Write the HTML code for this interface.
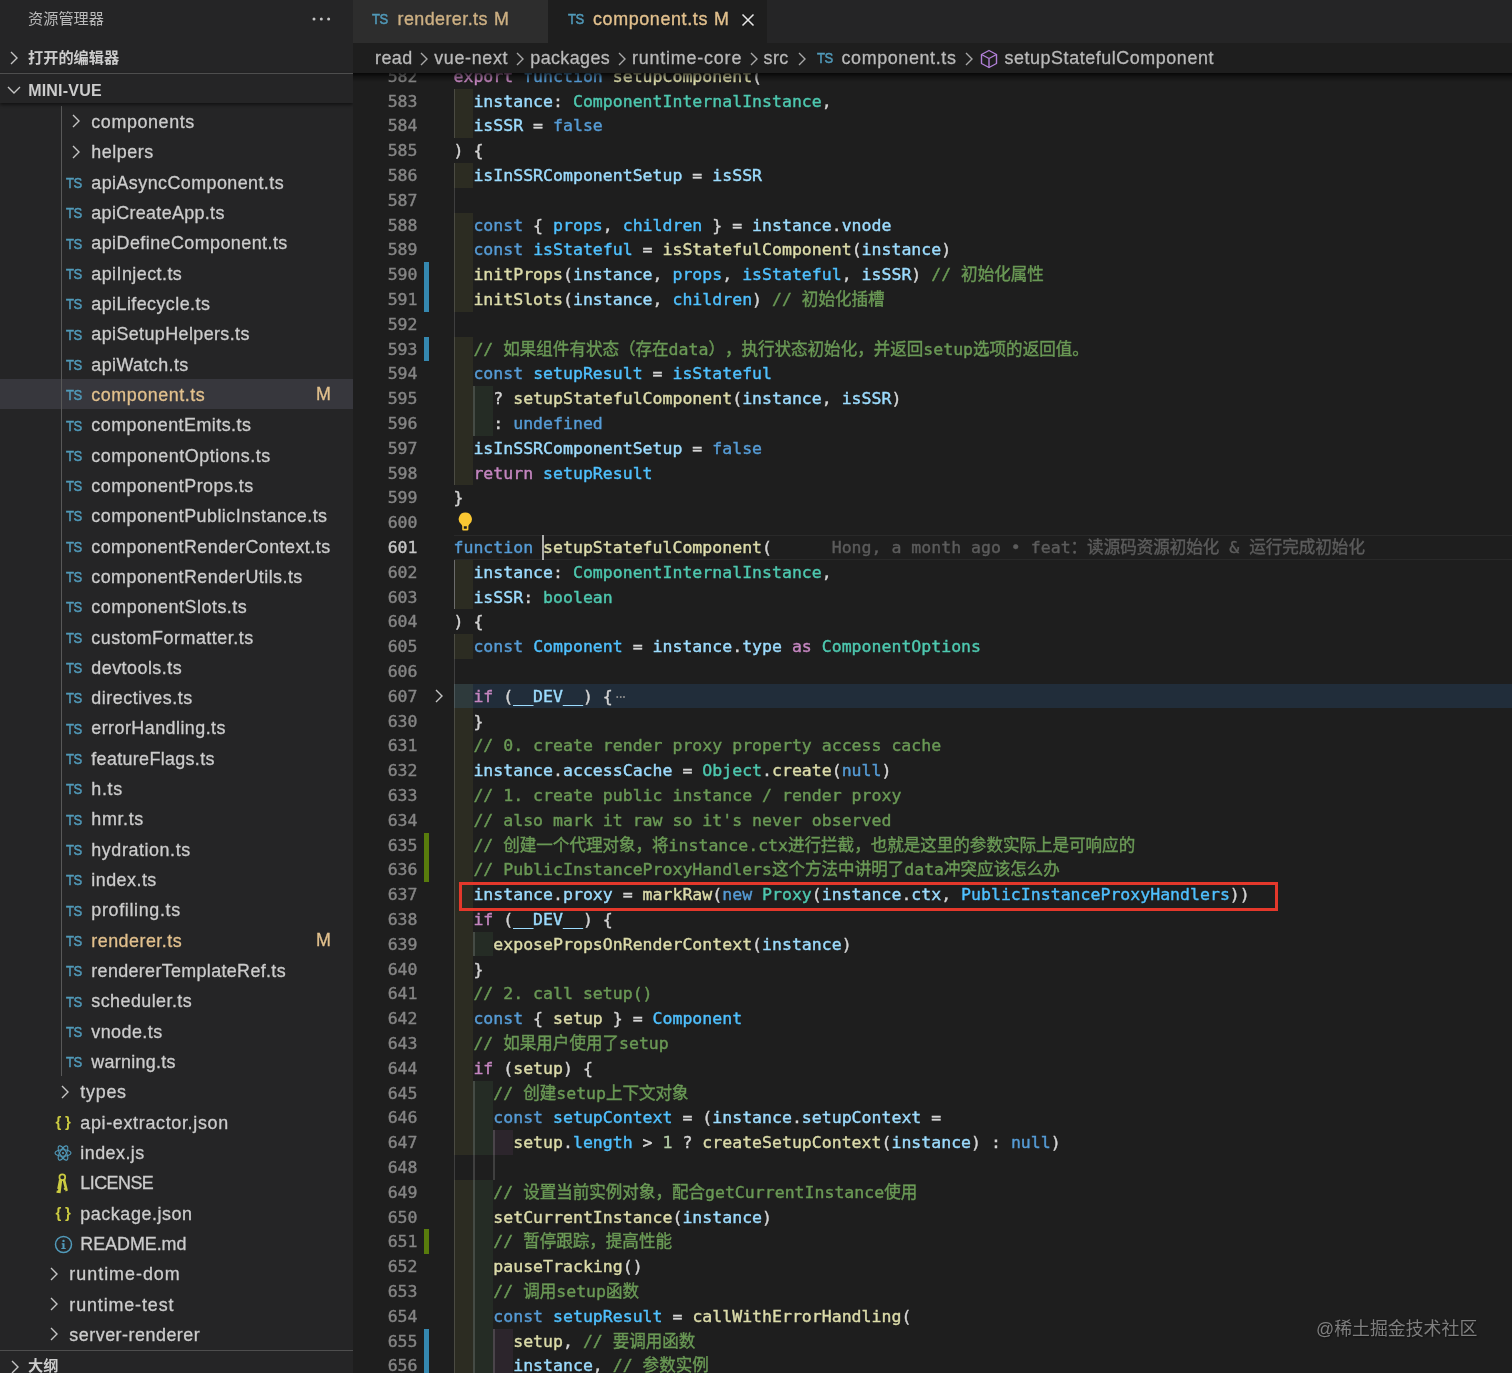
<!DOCTYPE html>
<html lang="zh-CN"><head><meta charset="utf-8"><title>component.ts — mini-vue</title>
<style>
*{box-sizing:border-box;margin:0;padding:0}
html,body{width:1512px;height:1373px;overflow:hidden;background:#1e1e1e}
body{position:relative;text-spacing-trim:space-all;font-family:'Liberation Sans','Noto Sans CJK SC',sans-serif;color:#ccc;-webkit-font-smoothing:antialiased}
.a{position:absolute;white-space:pre}
#sidebg{position:absolute;left:0;top:0;width:353px;height:1373px;background:#252526}
#side{position:absolute;left:0;top:0;width:353px;height:1373px;overflow:hidden;will-change:transform}
.row{position:absolute;left:0;width:353px;height:30.32px;line-height:30.32px;font-size:17.9px;color:#ccc;white-space:pre}
.row span.t{position:absolute;top:.8px;letter-spacing:.46px;-webkit-text-stroke:.3px}
.ts{position:absolute;top:1px;font-size:14.8px;color:#519aba;letter-spacing:-.4px;-webkit-text-stroke:.5px;transform:scaleX(.88);transform-origin:0 50%}
.hd{position:absolute;left:0;width:353px;height:30.32px;line-height:30.32px;font-size:15.2px;font-weight:bold;color:#ccc;white-space:pre}
#ed{position:absolute;left:353px;top:0;width:1159px;height:1373px;overflow:hidden;will-change:transform}
.ln{position:absolute;left:0;width:64.5px;text-align:right;color:#858585;font-family:'DejaVu Sans Mono','Liberation Mono','Noto Sans CJK SC',monospace;font-size:16.54px;height:24.8px;line-height:24.8px;padding-top:1px;-webkit-text-stroke:.4px}
.cl{position:absolute;left:100.5px;white-space:pre;font-family:'DejaVu Sans Mono','Liberation Mono','Noto Sans CJK SC',monospace;font-size:16.54px;height:24.8px;line-height:24.8px;padding-top:1px;color:#d4d4d4;-webkit-text-stroke:.4px}
.k{color:#c586c0}.s{color:#569cd6}.f{color:#dcdcaa}.v{color:#9cdcfe}.t{color:#4ec9b0}.c{color:#4fc1ff}.m{color:#6a9955}.n{color:#b5cea8}
.ir{position:absolute;height:24.8px}
.gb{position:absolute;left:71.2px;width:4.6px}
</style></head><body>

<div id="sidebg"></div><div id="side">
<span class="a" style="left:28px;top:8px;height:22px;line-height:22px;font-size:15.2px;color:#bbb">资源管理器</span>
<svg class="a" style="left:311px;top:16px" width="22" height="6" viewBox="0 0 22 6"><circle cx="3" cy="3" r="1.5" fill="#c5c5c5"/><circle cx="10.3" cy="3" r="1.5" fill="#c5c5c5"/><circle cx="17.6" cy="3" r="1.5" fill="#c5c5c5"/></svg>
<div class="hd" style="top:43px"><svg class="a" style="left:9.5px;top:8.2px" width="8.0" height="14.0" viewBox="0 0 8.00 14.00"><polyline points="1,1 7.00,7.00 1,13.00" fill="none" stroke="#c5c5c5" stroke-width="1.40" stroke-linejoin="miter"/></svg><span class="a" style="left:28px;top:0">打开的编辑器</span></div>
<div class="hd" style="top:73.3px;height:29.4px;border-top:1.5px solid #4e4e4e;box-shadow:0 2px 3px rgba(0,0,0,.5);z-index:3;background:#252526"><svg class="a" style="left:7.0px;top:12.2px" width="14.0" height="8.0" viewBox="0 0 14.00 8.00"><polyline points="1,1 7.00,7.00 13.00,1" fill="none" stroke="#c5c5c5" stroke-width="1.40" stroke-linejoin="miter"/></svg><span class="a" style="left:28.2px;top:1.9px;font-size:16px;letter-spacing:.2px">MINI-VUE</span></div>
<div class="a" style="left:0;top:379.18px;width:353px;height:30.32px;background:#37373d"></div>
<div class="a" style="left:61.3px;top:106.3px;width:1.2px;height:970.2px;background:#585858"></div>
<div class="row" style="top:106.30px"><svg class="a" style="left:71.8px;top:8.2px" width="8.0" height="14.0" viewBox="0 0 8.00 14.00"><polyline points="1,1 7.00,7.00 1,13.00" fill="none" stroke="#c5c5c5" stroke-width="1.40" stroke-linejoin="miter"/></svg><span class="t" style="left:91.3px;color:#ccc;letter-spacing:0.61px">components</span></div>
<div class="row" style="top:136.62px"><svg class="a" style="left:71.8px;top:8.2px" width="8.0" height="14.0" viewBox="0 0 8.00 14.00"><polyline points="1,1 7.00,7.00 1,13.00" fill="none" stroke="#c5c5c5" stroke-width="1.40" stroke-linejoin="miter"/></svg><span class="t" style="left:91.3px;color:#ccc;letter-spacing:0.53px">helpers</span></div>
<div class="row" style="top:166.94px"><span class="ts" style="left:66.0px">TS</span><span class="t" style="left:91.3px;color:#ccc;letter-spacing:0.44px">apiAsyncComponent.ts</span></div>
<div class="row" style="top:197.26px"><span class="ts" style="left:66.0px">TS</span><span class="t" style="left:91.3px;color:#ccc;letter-spacing:0.34px">apiCreateApp.ts</span></div>
<div class="row" style="top:227.58px"><span class="ts" style="left:66.0px">TS</span><span class="t" style="left:91.3px;color:#ccc;letter-spacing:0.45px">apiDefineComponent.ts</span></div>
<div class="row" style="top:257.90px"><span class="ts" style="left:66.0px">TS</span><span class="t" style="left:91.3px;color:#ccc;letter-spacing:0.45px">apiInject.ts</span></div>
<div class="row" style="top:288.22px"><span class="ts" style="left:66.0px">TS</span><span class="t" style="left:91.3px;color:#ccc;letter-spacing:0.44px">apiLifecycle.ts</span></div>
<div class="row" style="top:318.54px"><span class="ts" style="left:66.0px">TS</span><span class="t" style="left:91.3px;color:#ccc;letter-spacing:0.41px">apiSetupHelpers.ts</span></div>
<div class="row" style="top:348.86px"><span class="ts" style="left:66.0px">TS</span><span class="t" style="left:91.3px;color:#ccc;letter-spacing:0.42px">apiWatch.ts</span></div>
<div class="row" style="top:379.18px"><span class="ts" style="left:66.0px">TS</span><span class="t" style="left:91.3px;color:#e2c08d;letter-spacing:0.55px">component.ts</span><span class="a" style="left:316px;top:0;color:#e2c08d;font-size:17.9px;-webkit-text-stroke:.3px">M</span></div>
<div class="row" style="top:409.50px"><span class="ts" style="left:66.0px">TS</span><span class="t" style="left:91.3px;color:#ccc;letter-spacing:0.47px">componentEmits.ts</span></div>
<div class="row" style="top:439.82px"><span class="ts" style="left:66.0px">TS</span><span class="t" style="left:91.3px;color:#ccc;letter-spacing:0.55px">componentOptions.ts</span></div>
<div class="row" style="top:470.14px"><span class="ts" style="left:66.0px">TS</span><span class="t" style="left:91.3px;color:#ccc;letter-spacing:0.49px">componentProps.ts</span></div>
<div class="row" style="top:500.46px"><span class="ts" style="left:66.0px">TS</span><span class="t" style="left:91.3px;color:#ccc;letter-spacing:0.48px">componentPublicInstance.ts</span></div>
<div class="row" style="top:530.78px"><span class="ts" style="left:66.0px">TS</span><span class="t" style="left:91.3px;color:#ccc;letter-spacing:0.46px">componentRenderContext.ts</span></div>
<div class="row" style="top:561.10px"><span class="ts" style="left:66.0px">TS</span><span class="t" style="left:91.3px;color:#ccc;letter-spacing:0.46px">componentRenderUtils.ts</span></div>
<div class="row" style="top:591.42px"><span class="ts" style="left:66.0px">TS</span><span class="t" style="left:91.3px;color:#ccc;letter-spacing:0.52px">componentSlots.ts</span></div>
<div class="row" style="top:621.74px"><span class="ts" style="left:66.0px">TS</span><span class="t" style="left:91.3px;color:#ccc;letter-spacing:0.52px">customFormatter.ts</span></div>
<div class="row" style="top:652.06px"><span class="ts" style="left:66.0px">TS</span><span class="t" style="left:91.3px;color:#ccc;letter-spacing:0.48px">devtools.ts</span></div>
<div class="row" style="top:682.38px"><span class="ts" style="left:66.0px">TS</span><span class="t" style="left:91.3px;color:#ccc;letter-spacing:0.53px">directives.ts</span></div>
<div class="row" style="top:712.70px"><span class="ts" style="left:66.0px">TS</span><span class="t" style="left:91.3px;color:#ccc;letter-spacing:0.46px">errorHandling.ts</span></div>
<div class="row" style="top:743.02px"><span class="ts" style="left:66.0px">TS</span><span class="t" style="left:91.3px;color:#ccc;letter-spacing:0.34px">featureFlags.ts</span></div>
<div class="row" style="top:773.34px"><span class="ts" style="left:66.0px">TS</span><span class="t" style="left:91.3px;color:#ccc;letter-spacing:0.70px">h.ts</span></div>
<div class="row" style="top:803.66px"><span class="ts" style="left:66.0px">TS</span><span class="t" style="left:91.3px;color:#ccc;letter-spacing:0.65px">hmr.ts</span></div>
<div class="row" style="top:833.98px"><span class="ts" style="left:66.0px">TS</span><span class="t" style="left:91.3px;color:#ccc;letter-spacing:0.58px">hydration.ts</span></div>
<div class="row" style="top:864.30px"><span class="ts" style="left:66.0px">TS</span><span class="t" style="left:91.3px;color:#ccc;letter-spacing:0.48px">index.ts</span></div>
<div class="row" style="top:894.62px"><span class="ts" style="left:66.0px">TS</span><span class="t" style="left:91.3px;color:#ccc;letter-spacing:0.67px">profiling.ts</span></div>
<div class="row" style="top:924.94px"><span class="ts" style="left:66.0px">TS</span><span class="t" style="left:91.3px;color:#e2c08d;letter-spacing:0.48px">renderer.ts</span><span class="a" style="left:316px;top:0;color:#e2c08d;font-size:17.9px;-webkit-text-stroke:.3px">M</span></div>
<div class="row" style="top:955.26px"><span class="ts" style="left:66.0px">TS</span><span class="t" style="left:91.3px;color:#ccc;letter-spacing:0.35px">rendererTemplateRef.ts</span></div>
<div class="row" style="top:985.58px"><span class="ts" style="left:66.0px">TS</span><span class="t" style="left:91.3px;color:#ccc;letter-spacing:0.45px">scheduler.ts</span></div>
<div class="row" style="top:1015.90px"><span class="ts" style="left:66.0px">TS</span><span class="t" style="left:91.3px;color:#ccc;letter-spacing:0.45px">vnode.ts</span></div>
<div class="row" style="top:1046.22px"><span class="ts" style="left:66.0px">TS</span><span class="t" style="left:91.3px;color:#ccc;letter-spacing:0.30px">warning.ts</span></div>
<div class="row" style="top:1076.54px"><svg class="a" style="left:60.8px;top:8.2px" width="8.0" height="14.0" viewBox="0 0 8.00 14.00"><polyline points="1,1 7.00,7.00 1,13.00" fill="none" stroke="#c5c5c5" stroke-width="1.40" stroke-linejoin="miter"/></svg><span class="t" style="left:80.3px;color:#ccc;letter-spacing:0.75px">types</span></div>
<div class="row" style="top:1106.86px"><span class="a" style="left:55.6px;top:4.9px;height:20px;line-height:20px;font-size:15px;font-weight:bold;color:#cbcb41;letter-spacing:3.6px">{}</span><span class="t" style="left:80.3px;color:#ccc;letter-spacing:0.68px">api-extractor.json</span></div>
<div class="row" style="top:1137.18px"><svg class="a" style="left:54.3px;top:7.2px" width="18" height="18" viewBox="-9 -9 18 18" fill="none" stroke="#519aba" stroke-width="1.1"><ellipse rx="8" ry="3.2"/><ellipse rx="8" ry="3.2" transform="rotate(60)"/><ellipse rx="8" ry="3.2" transform="rotate(120)"/><circle r="1.1" fill="#519aba" stroke="none"/></svg><span class="t" style="left:80.3px;color:#ccc;letter-spacing:0.47px">index.js</span></div>
<div class="row" style="top:1167.50px"><svg class="a" style="left:54.8px;top:5.0px" width="14" height="21" viewBox="0 0 14 21"><circle cx="7.3" cy="4.2" r="2.9" fill="none" stroke="#cbcb41" stroke-width="1.7"/><path d="M4.0 6.4 L7.2 7.4 L5.6 20.2 L1.4 19.8 L1.8 17.4 L3.0 17.5 L3.2 15.9 L2.2 15.7Z" fill="#cbcb41"/><path d="M7.6 7.2 L10.2 6.2 L12.9 17.4 L10.6 18.4 L10.1 16.6 L9.1 16.9 L8.7 15.3 L9.6 15.0Z" fill="#cbcb41"/></svg><span class="t" style="left:80.3px;color:#ccc;letter-spacing:-0.52px">LICENSE</span></div>
<div class="row" style="top:1197.82px"><span class="a" style="left:55.6px;top:4.9px;height:20px;line-height:20px;font-size:15px;font-weight:bold;color:#cbcb41;letter-spacing:3.6px">{}</span><span class="t" style="left:80.3px;color:#ccc;letter-spacing:0.57px">package.json</span></div>
<div class="row" style="top:1228.14px"><svg class="a" style="left:53.5px;top:6.6px" width="19" height="19" viewBox="-9.5 -9.5 19 19"><circle r="8" fill="none" stroke="#519aba" stroke-width="1.5"/><circle cx="0" cy="-3.6" r="1.2" fill="#519aba"/><path d="M-1.8 -1.2H1V3.4H2.2V4.6H-2.2V3.4H-1V0H-1.8Z" fill="#519aba"/></svg><span class="t" style="left:80.3px;color:#ccc;letter-spacing:-0.03px">README.md</span></div>
<div class="row" style="top:1258.46px"><svg class="a" style="left:49.8px;top:8.2px" width="8.0" height="14.0" viewBox="0 0 8.00 14.00"><polyline points="1,1 7.00,7.00 1,13.00" fill="none" stroke="#c5c5c5" stroke-width="1.40" stroke-linejoin="miter"/></svg><span class="t" style="left:69.3px;color:#ccc;letter-spacing:1.00px">runtime-dom</span></div>
<div class="row" style="top:1288.78px"><svg class="a" style="left:49.8px;top:8.2px" width="8.0" height="14.0" viewBox="0 0 8.00 14.00"><polyline points="1,1 7.00,7.00 1,13.00" fill="none" stroke="#c5c5c5" stroke-width="1.40" stroke-linejoin="miter"/></svg><span class="t" style="left:69.3px;color:#ccc;letter-spacing:0.88px">runtime-test</span></div>
<div class="row" style="top:1319.10px"><svg class="a" style="left:49.8px;top:8.2px" width="8.0" height="14.0" viewBox="0 0 8.00 14.00"><polyline points="1,1 7.00,7.00 1,13.00" fill="none" stroke="#c5c5c5" stroke-width="1.40" stroke-linejoin="miter"/></svg><span class="t" style="left:69.3px;color:#ccc;letter-spacing:0.51px">server-renderer</span></div>
<div class="hd" style="top:1350.4px;border-top:1.5px solid #4e4e4e;background:#252526"><svg class="a" style="left:10.5px;top:8.2px" width="8.0" height="14.0" viewBox="0 0 8.00 14.00"><polyline points="1,1 7.00,7.00 1,13.00" fill="none" stroke="#c5c5c5" stroke-width="1.40" stroke-linejoin="miter"/></svg><span class="a" style="left:28px;top:0">大纲</span></div>
</div>
<div id="ed">
<div class="a" style="left:100.5px;top:683.70px;width:1060px;height:24.80px;background:#212d3a"></div>
<div class="a" style="left:100.5px;top:534.90px;width:1060px;height:24.80px;border-top:1.4px solid #292929;border-bottom:1.4px solid #292929"></div>
<div class="a" style="left:100.50px;top:88.50px;width:19.92px;height:49.60px;background:rgba(255,255,90,.062)"></div>
<div class="a" style="left:100.50px;top:162.90px;width:19.92px;height:24.80px;background:rgba(255,255,90,.062)"></div>
<div class="a" style="left:100.50px;top:212.50px;width:19.92px;height:99.20px;background:rgba(255,255,90,.062)"></div>
<div class="a" style="left:100.50px;top:336.50px;width:19.92px;height:148.80px;background:rgba(255,255,90,.062)"></div>
<div class="a" style="left:100.50px;top:559.70px;width:19.92px;height:49.60px;background:rgba(255,255,90,.062)"></div>
<div class="a" style="left:100.50px;top:634.10px;width:19.92px;height:24.80px;background:rgba(255,255,90,.062)"></div>
<div class="a" style="left:100.50px;top:683.70px;width:19.92px;height:471.20px;background:rgba(255,255,90,.062)"></div>
<div class="a" style="left:100.50px;top:1179.70px;width:19.92px;height:198.40px;background:rgba(255,255,90,.062)"></div>
<div class="a" style="left:120.42px;top:386.10px;width:19.92px;height:49.60px;background:rgba(140,255,140,.062)"></div>
<div class="a" style="left:120.42px;top:931.70px;width:19.92px;height:24.80px;background:rgba(140,255,140,.062)"></div>
<div class="a" style="left:120.42px;top:1080.50px;width:19.92px;height:74.40px;background:rgba(140,255,140,.062)"></div>
<div class="a" style="left:120.42px;top:1179.70px;width:19.92px;height:198.40px;background:rgba(140,255,140,.062)"></div>
<div class="a" style="left:140.34px;top:1130.10px;width:19.92px;height:24.80px;background:rgba(255,140,255,.062)"></div>
<div class="a" style="left:140.34px;top:1328.50px;width:19.92px;height:49.60px;background:rgba(255,140,255,.062)"></div>
<div class="a" style="left:100.50px;top:88.50px;width:1.4px;height:49.60px;background:rgba(255,255,255,.15)"></div>
<div class="a" style="left:100.50px;top:162.90px;width:1.4px;height:322.40px;background:rgba(255,255,255,.15)"></div>
<div class="a" style="left:100.50px;top:559.70px;width:1.4px;height:49.60px;background:rgba(255,255,255,.15)"></div>
<div class="a" style="left:100.50px;top:634.10px;width:1.4px;height:744.00px;background:rgba(255,255,255,.15)"></div>
<div class="a" style="left:120.42px;top:386.10px;width:1.4px;height:49.60px;background:rgba(255,255,255,.15)"></div>
<div class="a" style="left:120.42px;top:931.70px;width:1.4px;height:24.80px;background:rgba(255,255,255,.15)"></div>
<div class="a" style="left:120.42px;top:1080.50px;width:1.4px;height:297.60px;background:rgba(255,255,255,.15)"></div>
<div class="a" style="left:140.34px;top:1130.10px;width:1.4px;height:49.60px;background:rgba(255,255,255,.15)"></div>
<div class="a" style="left:140.34px;top:1328.50px;width:1.4px;height:49.60px;background:rgba(255,255,255,.15)"></div>
<div class="a" style="left:100.50px;top:559.70px;width:1.4px;height:49.60px;background:#6c6c6c"></div>
<div class="gb" style="top:262.10px;height:49.60px;background:#3588b0"></div>
<div class="gb" style="top:336.50px;height:24.80px;background:#3588b0"></div>
<div class="gb" style="top:1328.50px;height:49.60px;background:#3588b0"></div>
<div class="gb" style="top:832.50px;height:49.60px;background:#587c0c"></div>
<div class="gb" style="top:1229.30px;height:24.80px;background:#587c0c"></div>
<div class="ln" style="top:63.70px">582</div>
<div class="cl" style="top:63.70px"><span class="k">export</span> <span class="s">function</span> <span class="f">setupComponent</span>(</div>
<div class="ln" style="top:88.50px">583</div>
<div class="cl" style="top:88.50px">  <span class="v">instance</span>: <span class="t">ComponentInternalInstance</span>,</div>
<div class="ln" style="top:113.30px">584</div>
<div class="cl" style="top:113.30px">  <span class="v">isSSR</span> = <span class="s">false</span></div>
<div class="ln" style="top:138.10px">585</div>
<div class="cl" style="top:138.10px">) {</div>
<div class="ln" style="top:162.90px">586</div>
<div class="cl" style="top:162.90px">  <span class="v">isInSSRComponentSetup</span> = <span class="v">isSSR</span></div>
<div class="ln" style="top:187.70px">587</div>
<div class="ln" style="top:212.50px">588</div>
<div class="cl" style="top:212.50px">  <span class="s">const</span> { <span class="c">props</span>, <span class="c">children</span> } = <span class="v">instance</span>.<span class="v">vnode</span></div>
<div class="ln" style="top:237.30px">589</div>
<div class="cl" style="top:237.30px">  <span class="s">const</span> <span class="c">isStateful</span> = <span class="f">isStatefulComponent</span>(<span class="v">instance</span>)</div>
<div class="ln" style="top:262.10px">590</div>
<div class="cl" style="top:262.10px">  <span class="f">initProps</span>(<span class="v">instance</span>, <span class="c">props</span>, <span class="c">isStateful</span>, <span class="v">isSSR</span>) <span class="m">// 初始化属性</span></div>
<div class="ln" style="top:286.90px">591</div>
<div class="cl" style="top:286.90px">  <span class="f">initSlots</span>(<span class="v">instance</span>, <span class="c">children</span>) <span class="m">// 初始化插槽</span></div>
<div class="ln" style="top:311.70px">592</div>
<div class="ln" style="top:336.50px">593</div>
<div class="cl" style="top:336.50px">  <span class="m">// 如果组件有状态（存在data），执行状态初始化，并返回setup选项的返回值。</span></div>
<div class="ln" style="top:361.30px">594</div>
<div class="cl" style="top:361.30px">  <span class="s">const</span> <span class="c">setupResult</span> = <span class="c">isStateful</span></div>
<div class="ln" style="top:386.10px">595</div>
<div class="cl" style="top:386.10px">    ? <span class="f">setupStatefulComponent</span>(<span class="v">instance</span>, <span class="v">isSSR</span>)</div>
<div class="ln" style="top:410.90px">596</div>
<div class="cl" style="top:410.90px">    : <span class="s">undefined</span></div>
<div class="ln" style="top:435.70px">597</div>
<div class="cl" style="top:435.70px">  <span class="v">isInSSRComponentSetup</span> = <span class="s">false</span></div>
<div class="ln" style="top:460.50px">598</div>
<div class="cl" style="top:460.50px">  <span class="k">return</span> <span class="c">setupResult</span></div>
<div class="ln" style="top:485.30px">599</div>
<div class="cl" style="top:485.30px">}</div>
<div class="ln" style="top:510.10px">600</div>
<div class="ln" style="top:534.90px;color:#c6c6c6">601</div>
<div class="cl" style="top:534.90px"><span class="s">function</span> <span class="f">setupStatefulComponent</span>(<span style="color:#5c5c5c">      Hong, a month ago • feat：读源码资源初始化 &amp; 运行完成初始化</span></div>
<div class="ln" style="top:559.70px">602</div>
<div class="cl" style="top:559.70px">  <span class="v">instance</span>: <span class="t">ComponentInternalInstance</span>,</div>
<div class="ln" style="top:584.50px">603</div>
<div class="cl" style="top:584.50px">  <span class="v">isSSR</span>: <span class="t">boolean</span></div>
<div class="ln" style="top:609.30px">604</div>
<div class="cl" style="top:609.30px">) {</div>
<div class="ln" style="top:634.10px">605</div>
<div class="cl" style="top:634.10px">  <span class="s">const</span> <span class="c">Component</span> = <span class="v">instance</span>.<span class="v">type</span> <span class="k">as</span> <span class="t">ComponentOptions</span></div>
<div class="ln" style="top:658.90px">606</div>
<div class="ln" style="top:683.70px">607</div>
<div class="cl" style="top:683.70px">  <span class="k">if</span> (<span class="v">__DEV__</span>) {<span style="color:#8a8a8a;font-size:10px;-webkit-text-stroke:0;position:relative;top:-1px;left:1.5px;letter-spacing:-2.6px;font-weight:bold">···</span></div>
<div class="ln" style="top:708.50px">630</div>
<div class="cl" style="top:708.50px">  }</div>
<div class="ln" style="top:733.30px">631</div>
<div class="cl" style="top:733.30px">  <span class="m">// 0. create render proxy property access cache</span></div>
<div class="ln" style="top:758.10px">632</div>
<div class="cl" style="top:758.10px">  <span class="v">instance</span>.<span class="v">accessCache</span> = <span class="t">Object</span>.<span class="f">create</span>(<span class="s">null</span>)</div>
<div class="ln" style="top:782.90px">633</div>
<div class="cl" style="top:782.90px">  <span class="m">// 1. create public instance / render proxy</span></div>
<div class="ln" style="top:807.70px">634</div>
<div class="cl" style="top:807.70px">  <span class="m">// also mark it raw so it&#x27;s never observed</span></div>
<div class="ln" style="top:832.50px">635</div>
<div class="cl" style="top:832.50px">  <span class="m">// 创建一个代理对象，将instance.ctx进行拦截，也就是这里的参数实际上是可响应的</span></div>
<div class="ln" style="top:857.30px">636</div>
<div class="cl" style="top:857.30px">  <span class="m">// PublicInstanceProxyHandlers这个方法中讲明了data冲突应该怎么办</span></div>
<div class="ln" style="top:882.10px">637</div>
<div class="cl" style="top:882.10px">  <span class="v">instance</span>.<span class="v">proxy</span> = <span class="f">markRaw</span>(<span class="s">new</span> <span class="t">Proxy</span>(<span class="v">instance</span>.<span class="v">ctx</span>, <span class="c">PublicInstanceProxyHandlers</span>))</div>
<div class="ln" style="top:906.90px">638</div>
<div class="cl" style="top:906.90px">  <span class="k">if</span> (<span class="v">__DEV__</span>) {</div>
<div class="ln" style="top:931.70px">639</div>
<div class="cl" style="top:931.70px">    <span class="f">exposePropsOnRenderContext</span>(<span class="v">instance</span>)</div>
<div class="ln" style="top:956.50px">640</div>
<div class="cl" style="top:956.50px">  }</div>
<div class="ln" style="top:981.30px">641</div>
<div class="cl" style="top:981.30px">  <span class="m">// 2. call setup()</span></div>
<div class="ln" style="top:1006.10px">642</div>
<div class="cl" style="top:1006.10px">  <span class="s">const</span> { <span class="f">setup</span> } = <span class="c">Component</span></div>
<div class="ln" style="top:1030.90px">643</div>
<div class="cl" style="top:1030.90px">  <span class="m">// 如果用户使用了setup</span></div>
<div class="ln" style="top:1055.70px">644</div>
<div class="cl" style="top:1055.70px">  <span class="k">if</span> (<span class="f">setup</span>) {</div>
<div class="ln" style="top:1080.50px">645</div>
<div class="cl" style="top:1080.50px">    <span class="m">// 创建setup上下文对象</span></div>
<div class="ln" style="top:1105.30px">646</div>
<div class="cl" style="top:1105.30px">    <span class="s">const</span> <span class="c">setupContext</span> = (<span class="v">instance</span>.<span class="v">setupContext</span> =</div>
<div class="ln" style="top:1130.10px">647</div>
<div class="cl" style="top:1130.10px">      <span class="f">setup</span>.<span class="c">length</span> > <span class="n">1</span> ? <span class="f">createSetupContext</span>(<span class="v">instance</span>) : <span class="s">null</span>)</div>
<div class="ln" style="top:1154.90px">648</div>
<div class="ln" style="top:1179.70px">649</div>
<div class="cl" style="top:1179.70px">    <span class="m">// 设置当前实例对象，配合getCurrentInstance使用</span></div>
<div class="ln" style="top:1204.50px">650</div>
<div class="cl" style="top:1204.50px">    <span class="f">setCurrentInstance</span>(<span class="v">instance</span>)</div>
<div class="ln" style="top:1229.30px">651</div>
<div class="cl" style="top:1229.30px">    <span class="m">// 暂停跟踪，提高性能</span></div>
<div class="ln" style="top:1254.10px">652</div>
<div class="cl" style="top:1254.10px">    <span class="f">pauseTracking</span>()</div>
<div class="ln" style="top:1278.90px">653</div>
<div class="cl" style="top:1278.90px">    <span class="m">// 调用setup函数</span></div>
<div class="ln" style="top:1303.70px">654</div>
<div class="cl" style="top:1303.70px">    <span class="s">const</span> <span class="c">setupResult</span> = <span class="f">callWithErrorHandling</span>(</div>
<div class="ln" style="top:1328.50px">655</div>
<div class="cl" style="top:1328.50px">      <span class="f">setup</span>, <span class="m">// 要调用函数</span></div>
<div class="ln" style="top:1353.30px">656</div>
<div class="cl" style="top:1353.30px">      <span class="v">instance</span>, <span class="m">// 参数实例</span></div>
<div class="a" style="left:188.53px;top:535.20px;width:2.8px;height:24.8px;background:#aeafad"></div>
<svg class="a" style="left:81.5px;top:689.1px" width="8.0" height="14.0" viewBox="0 0 8.00 14.00"><polyline points="1,1 7.00,7.00 1,13.00" fill="none" stroke="#c5c5c5" stroke-width="1.40" stroke-linejoin="miter"/></svg>
<svg class="a" style="left:105.2px;top:511.9px" width="15" height="19" viewBox="0 0 15 19"><path fill-rule="evenodd" d="M7.3 .6a6.5 6.5 0 0 0-4.1 11.6c.7.6 1 1.3 1 2.1v3.3c0 .5.4.9.9.9h4.4c.5 0 .9-.4.9-.9v-3.3c0-.8.3-1.5 1-2.1A6.5 6.5 0 0 0 7.3 .6zM5.8 14.3h3v2.4h-3z" fill="#fbc832"/></svg>
<div class="a" style="left:105.8px;top:882.0px;width:819.7px;height:28.8px;border:3.3px solid #e4382b"></div>
<div class="a" style="left:0;top:42.5px;width:1159px;height:30.8px;background:#1e1e1e;z-index:5"></div>
<div class="a" style="left:0;top:73.3px;width:1159px;height:9px;background:linear-gradient(rgba(0,0,0,.75),rgba(0,0,0,.35) 40%,rgba(0,0,0,0));z-index:5"></div>
<span class="a" style="left:22.0px;top:43.3px;height:30.8px;line-height:31.5px;font-size:17.9px;letter-spacing:0.48px;color:#b9b9b9;z-index:6;-webkit-text-stroke:.3px">read</span>
<div class="a" style="left:0;top:0;z-index:6"><svg class="a" style="left:66.8px;top:51.5px" width="8.0" height="14.0" viewBox="0 0 8.00 14.00"><polyline points="1,1 7.00,7.00 1,13.00" fill="none" stroke="#a8a8a8" stroke-width="1.40" stroke-linejoin="miter"/></svg></div>
<span class="a" style="left:81.2px;top:43.3px;height:30.8px;line-height:31.5px;font-size:17.9px;letter-spacing:0.68px;color:#b9b9b9;z-index:6;-webkit-text-stroke:.3px">vue-next</span>
<div class="a" style="left:0;top:0;z-index:6"><svg class="a" style="left:162.8px;top:51.5px" width="8.0" height="14.0" viewBox="0 0 8.00 14.00"><polyline points="1,1 7.00,7.00 1,13.00" fill="none" stroke="#a8a8a8" stroke-width="1.40" stroke-linejoin="miter"/></svg></div>
<span class="a" style="left:177.3px;top:43.3px;height:30.8px;line-height:31.5px;font-size:17.9px;letter-spacing:0.40px;color:#b9b9b9;z-index:6;-webkit-text-stroke:.3px">packages</span>
<div class="a" style="left:0;top:0;z-index:6"><svg class="a" style="left:264.8px;top:51.5px" width="8.0" height="14.0" viewBox="0 0 8.00 14.00"><polyline points="1,1 7.00,7.00 1,13.00" fill="none" stroke="#a8a8a8" stroke-width="1.40" stroke-linejoin="miter"/></svg></div>
<span class="a" style="left:279.0px;top:43.3px;height:30.8px;line-height:31.5px;font-size:17.9px;letter-spacing:0.81px;color:#b9b9b9;z-index:6;-webkit-text-stroke:.3px">runtime-core</span>
<div class="a" style="left:0;top:0;z-index:6"><svg class="a" style="left:396.8px;top:51.5px" width="8.0" height="14.0" viewBox="0 0 8.00 14.00"><polyline points="1,1 7.00,7.00 1,13.00" fill="none" stroke="#a8a8a8" stroke-width="1.40" stroke-linejoin="miter"/></svg></div>
<span class="a" style="left:410.5px;top:43.3px;height:30.8px;line-height:31.5px;font-size:17.9px;letter-spacing:0.45px;color:#b9b9b9;z-index:6;-webkit-text-stroke:.3px">src</span>
<div class="a" style="left:0;top:0;z-index:6"><svg class="a" style="left:444.8px;top:51.5px" width="8.0" height="14.0" viewBox="0 0 8.00 14.00"><polyline points="1,1 7.00,7.00 1,13.00" fill="none" stroke="#a8a8a8" stroke-width="1.40" stroke-linejoin="miter"/></svg></div>
<span class="a" style="left:463.5px;top:48.0px;height:20px;line-height:20px;font-size:14.8px;color:#519aba;letter-spacing:-.4px;-webkit-text-stroke:.5px;z-index:6;transform:scaleX(.88);transform-origin:0 50%">TS</span>
<span class="a" style="left:488.5px;top:43.3px;height:30.8px;line-height:31.5px;font-size:17.9px;letter-spacing:0.63px;color:#b9b9b9;z-index:6;-webkit-text-stroke:.3px">component.ts</span>
<div class="a" style="left:0;top:0;z-index:6"><svg class="a" style="left:611.8px;top:51.5px" width="8.0" height="14.0" viewBox="0 0 8.00 14.00"><polyline points="1,1 7.00,7.00 1,13.00" fill="none" stroke="#a8a8a8" stroke-width="1.40" stroke-linejoin="miter"/></svg></div>
<svg class="a" style="left:627.0px;top:48.5px;z-index:6" width="18" height="20" viewBox="0 0 18 20" fill="none" stroke="#b180d7" stroke-width="1.4" stroke-linejoin="round"><path d="M9 1.5 L16.5 5.5 V14.5 L9 18.5 L1.5 14.5 V5.5 Z"/><path d="M1.5 5.5 L9 9.5 L16.5 5.5 M9 9.5 V18.5"/></svg>
<span class="a" style="left:651.5px;top:43.3px;height:30.8px;line-height:31.5px;font-size:17.9px;letter-spacing:0.57px;color:#b9b9b9;z-index:6;-webkit-text-stroke:.3px">setupStatefulComponent</span>
<div class="a" style="left:0;top:0;width:1159px;height:42.5px;background:#252526;z-index:6"></div>
<div class="a" style="left:0;top:0;width:195px;height:42.5px;background:#2d2d2d;z-index:6"></div>
<div class="a" style="left:195px;top:0;width:219px;height:42.5px;background:#1e1e1e;z-index:6"></div>
<span class="a" style="left:18.5px;top:8.5px;height:20px;line-height:20px;font-size:14.8px;color:#519aba;letter-spacing:-.4px;-webkit-text-stroke:.5px;z-index:7;transform:scaleX(.88);transform-origin:0 50%">TS</span>
<span class="a" style="left:44.5px;top:4.3px;height:30px;line-height:30px;font-size:17.9px;letter-spacing:0.44px;color:#cdb083;z-index:7;-webkit-text-stroke:.35px">renderer.ts</span>
<span class="a" style="left:141.0px;top:4.3px;height:30px;line-height:30px;font-size:17.9px;letter-spacing:0.45px;color:#cdb083;z-index:7;-webkit-text-stroke:.35px">M</span>
<span class="a" style="left:214.5px;top:8.5px;height:20px;line-height:20px;font-size:14.8px;color:#519aba;letter-spacing:-.4px;-webkit-text-stroke:.5px;z-index:7;transform:scaleX(.88);transform-origin:0 50%">TS</span>
<span class="a" style="left:240.0px;top:4.3px;height:30px;line-height:30px;font-size:17.9px;letter-spacing:0.63px;color:#e2c08d;z-index:7;-webkit-text-stroke:.35px">component.ts</span>
<span class="a" style="left:361.0px;top:4.3px;height:30px;line-height:30px;font-size:17.9px;letter-spacing:0.45px;color:#e2c08d;z-index:7;-webkit-text-stroke:.35px">M</span>
<svg class="a" style="left:388.0px;top:12.5px;z-index:7" width="14" height="14" viewBox="0 0 14 14"><path d="M1.5 1.5 L12.5 12.5 M12.5 1.5 L1.5 12.5" stroke="#e8e8e8" stroke-width="1.5"/></svg>
<span class="a" style="left:963px;top:1316px;height:26px;line-height:26px;font-size:17.9px;color:#7e7e7e;text-shadow:1px 1px 2px rgba(0,0,0,.5);z-index:7">@稀土掘金技术社区</span>
</div>
</body></html>
